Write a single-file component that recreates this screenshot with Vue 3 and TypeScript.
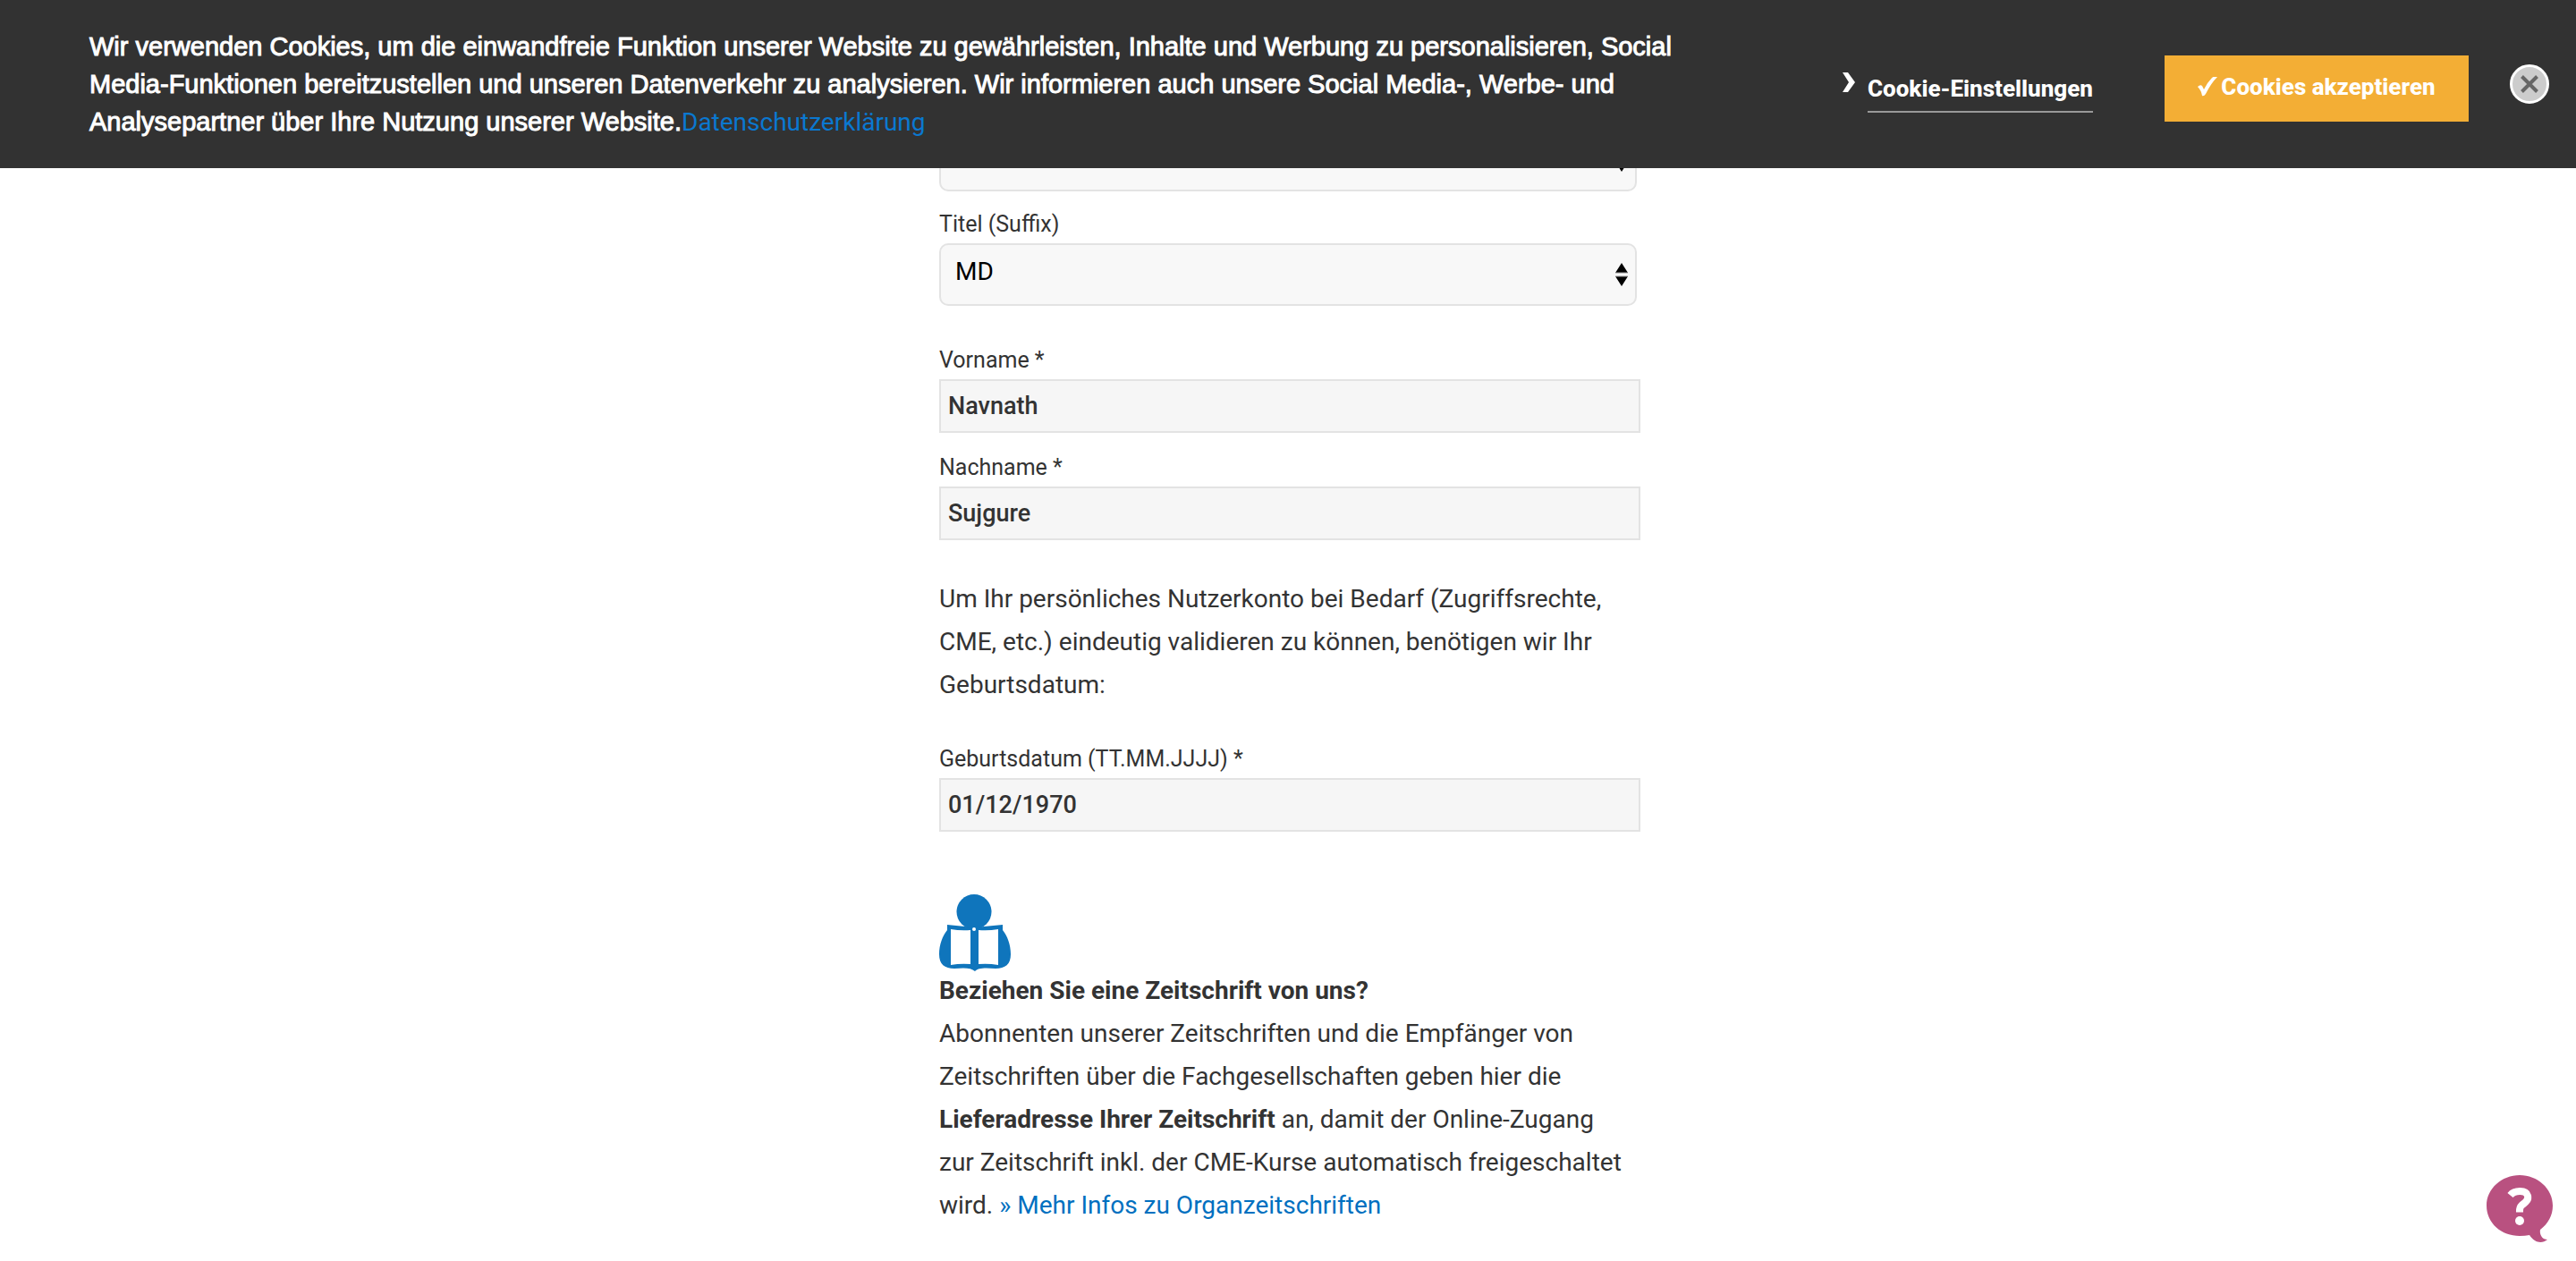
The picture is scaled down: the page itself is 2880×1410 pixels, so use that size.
<script setup lang="ts">
import { ref } from 'vue'

const prefix = ref('')
const suffix = ref('MD')
const firstName = ref('Navnath')
const lastName = ref('Sujgure')
const birthDate = ref('01/12/1970')
const bannerOpen = ref(true)
</script>

<template>
  <div class="page">
    <section v-if="bannerOpen" class="banner" aria-label="Cookie-Hinweis">
      <p class="banner-text">
        Wir verwenden Cookies, um die einwandfreie Funktion unserer Website zu gewährleisten, Inhalte und Werbung zu
        personalisieren, Social Media-Funktionen bereitzustellen und unseren Datenverkehr zu analysieren. Wir
        informieren auch unsere Social Media-, Werbe- und Analysepartner über Ihre Nutzung unserer Website.<a
          href="#datenschutz">Datenschutzerklärung</a>
      </p>
      <div class="banner-actions">
        <a class="settings" href="#cookies">
          <svg class="chevron" viewBox="0 0 14 22" aria-hidden="true">
            <path d="M0 0h6l8 11-8 11H0l7-11z" fill="#fff" />
          </svg>
          <span>Cookie-Einstellungen</span>
        </a>
        <button class="accept" type="button" @click="bannerOpen = false">
          <svg class="check" viewBox="0 0 22 22" aria-hidden="true">
            <path d="M0 11Q3 8 5 10L7 14Q11 6 16 1 18 -1 22 0 15 7 9 19 7 22 5 21 4 15 0 11z" fill="#fff" />
          </svg>
          Cookies akzeptieren
        </button>
        <button class="close" type="button" aria-label="Schließen" @click="bannerOpen = false">
          <svg viewBox="0 0 44 44" aria-hidden="true">
            <circle cx="22" cy="22" r="20.500" fill="#ccc" stroke="#fff" stroke-width="3" />
            <path d="M13.500 13.500L30.500 30.500M30.500 13.500L13.500 30.500" stroke="#666" stroke-width="4" />
          </svg>
        </button>
      </div>
    </section>

    <form class="form" @submit.prevent>
      <div class="select-box">
        <select id="prefix" v-model="prefix" aria-label="Titel">
          <option value=""></option>
          <option>Dr.</option>
        </select>
        <svg class="arrows" viewBox="0 0 14 26" aria-hidden="true">
          <path d="M7 0l7 11H0zM0 15h14L7 26z" /><path d="M0 11h14M0 15h14" stroke="#999" />
        </svg>
      </div>

      <label class="next-label" for="suffix">Titel (Suffix)</label>
      <div class="select-box">
        <select id="suffix" v-model="suffix">
          <option>MD</option>
          <option>PhD</option>
        </select>
        <svg class="arrows" viewBox="0 0 14 26" aria-hidden="true">
          <path d="M7 0l7 11H0zM0 15h14L7 26z" /><path d="M0 11h14M0 15h14" stroke="#999" />
        </svg>
      </div>

      <div class="group">
        <label for="first">Vorname *</label>
        <input id="first" v-model="firstName" type="text" />
        <label class="next-label" for="last">Nachname *</label>
        <input id="last" v-model="lastName" type="text" />
      </div>

      <p class="group">
        Um Ihr persönliches Nutzerkonto bei Bedarf (Zugriffsrechte, CME, etc.) eindeutig validieren zu können,
        benötigen wir Ihr Geburtsdatum:
      </p>

      <div class="group">
        <label for="birth">Geburtsdatum (TT.MM.JJJJ) *</label>
        <input id="birth" v-model="birthDate" type="text" />
      </div>

      <section class="journal">
        <svg class="reader" viewBox="0 0 80 86" aria-hidden="true">
          <path d="M9 34L29 36Q36 37 39 39 42 37 50 36L71 34V40C76 46 80 56 80 67 80 78 74 83 63 83 52 82 43 82 40 86 36 82 28 82 17 83 6 83 0 78 0 67 0 56 4 46 9 40z" fill="#0f75bc" />
          <circle cx="39" cy="19.500" r="19.500" fill="#0f75bc" />
          <path d="M13 39Q24 41 35 40V78Q24 77 13 79zM44 40Q55 41 66 39V79Q55 77 44 78z" fill="#fff" />
          <circle cx="39" cy="39" r="2" fill="#fff" />
        </svg>
        <h2>Beziehen Sie eine Zeitschrift von uns?</h2>
        <p>
          Abonnenten unserer Zeitschriften und die Empfänger von Zeitschriften über die Fachgesellschaften geben hier
          die <strong>Lieferadresse Ihrer Zeitschrift</strong> an, damit der Online-Zugang zur Zeitschrift inkl. der
          CME-Kurse automatisch freigeschaltet wird. <a href="#organzeitschriften">» Mehr Infos zu Organzeitschriften</a>
        </p>
      </section>
    </form>

    <button class="help" type="button" aria-label="Hilfe">
      <svg viewBox="0 0 74 76" aria-hidden="true">
        <path d="M37 0C57 0 74 15 74 34 74 45 69 54 60 61 59 66 62 72 68 72 62 77 54 76 48 67Q43 68 37 68C17 68 0 54 0 34 0 15 17 0 37 0z" fill="#b95180" />
        <path d="M26.500 22.500C31 17 44 16 46 23 47.500 29 42 31 39 34 36.500 36.500 37 39 37 41.500" fill="none" stroke="#fff" stroke-width="8" />
        <circle cx="37" cy="51" r="5" fill="#fff" />
      </svg>
    </button>
  </div>
</template>

<style>
body {
  margin: 0;
  background: #fff;
}
</style>

<style scoped>
.page {
  color: #333;
  font-family: Roboto, "Noto Sans", sans-serif;
  font-size: 28px;
  line-height: 48px;
}

a {
  color: #0070c0;
  text-decoration: none;
}

button {
  border: 0;
  padding: 0;
  cursor: pointer;
  font: inherit;
}

.banner {
  position: fixed;
  top: 0;
  left: 0;
  right: 0;
  z-index: 2;
  display: flex;
  align-items: center;
  justify-content: space-between;
  box-sizing: border-box;
  padding: 31px 30px 31px 100px;
  background: #323232;
}

.banner-text {
  flex: 0 1 1820px;
  margin: 0;
  color: #fff;
  font-family: "Liberation Sans", Arial, sans-serif;
  font-size: 29px;
  line-height: 42px;
  -webkit-text-stroke: 1px #fff;
}

.banner-text a {
  color: #0a78d0;
  font-family: Roboto, "Noto Sans", sans-serif;
  font-size: 28px;
  line-height: 36px;
  -webkit-text-stroke: 0;
}

.banner-actions {
  display: flex;
  align-items: center;
  flex: none;
  color: #fff;
  font-size: 26px;
  font-weight: 800;
  line-height: 36px;
}

.settings {
  display: flex;
  align-items: flex-start;
  gap: 14px;
  margin: 18px 80px 0 0;
  color: #fff;
}

.settings span {
  padding-bottom: 7px;
  border-bottom: 2px solid #999;
}

.chevron {
  width: 14px;
  height: 22px;
}

.accept {
  display: flex;
  align-items: center;
  justify-content: center;
  gap: 4px;
  box-sizing: border-box;
  min-width: 340px;
  height: 74px;
  margin: 10px 46px 0 0;
  padding: 0 32px 4px;
  background: #f3ae35;
  color: #fff;
}

.check {
  width: 22px;
  height: 22px;
}

.close {
  width: 44px;
  height: 44px;
  background: none;
}

.close svg,
.help svg {
  display: block;
  width: 100%;
}

.form {
  max-width: 780px;
  margin: 0 auto;
  padding: 144px 0 28px;
}

.form p {
  margin: 0;
}

.form .group {
  margin-top: 42px;
}

.form p + .group {
  margin-top: 40px;
}

label {
  display: block;
  margin-bottom: 2px;
  font-size: 25px;
  line-height: 38px;
}

.next-label {
  margin-top: 18px;
}

.group .next-label {
  margin-top: 20px;
}

.select-box {
  position: relative;
}

select {
  display: block;
  appearance: none;
  box-sizing: border-box;
  width: 100%;
  height: 70px;
  padding: 0 40px 6px 16px;
  border: 2px solid #e3e3e3;
  border-radius: 10px;
  background: #f8f8f8;
  color: #000;
  font: inherit;
}

.arrows {
  position: absolute;
  top: 22px;
  right: 10px;
  width: 14px;
  height: 26px;
}

input {
  display: block;
  box-sizing: border-box;
  width: calc(100% + 4px);
  height: 60px;
  padding: 0 8px;
  border: 2px solid #e3e3e3;
  background: #f6f6f6;
  color: #333;
  font: 500 27px Roboto, "Noto Sans", sans-serif;
}

.journal {
  margin-top: 70px;
}

.journal p {
  padding-right: 8px;
}

.reader {
  display: block;
  width: 80px;
  height: 86px;
  margin-bottom: -2px;
}

h2 {
  margin: 0;
  font-size: 28px;
  font-weight: 700;
  line-height: 48px;
}

strong {
  font-weight: 700;
}

.help {
  position: fixed;
  right: 26px;
  bottom: 20px;
  width: 74px;
  background: none;
}
</style>
